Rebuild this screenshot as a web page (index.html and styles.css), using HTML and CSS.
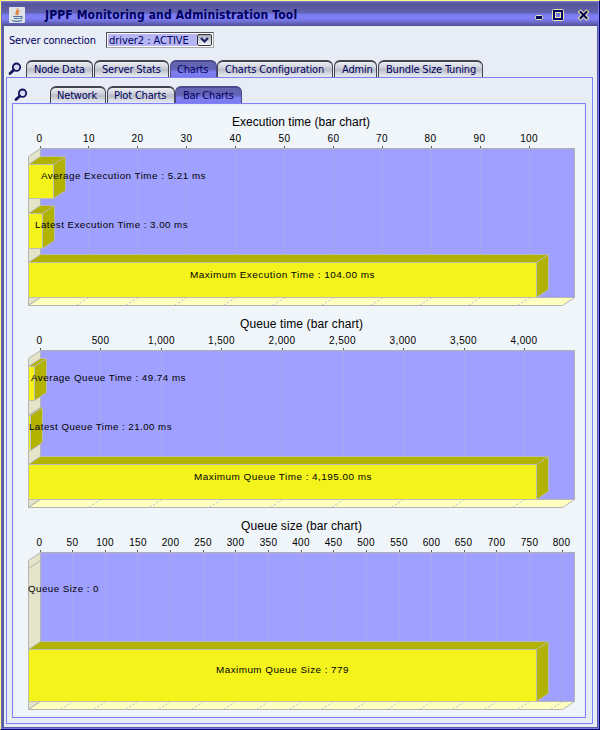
FILE: index.html
```html
<!DOCTYPE html>
<html lang="en">
<head>
<meta charset="utf-8">
<title>JPPF Monitoring and Administration Tool</title>
<link rel="stylesheet" href="styles.css">
</head>
<body>
<div class="window">
  <header class="titlebar">
    <svg class="java" width="16" height="16" viewBox="0 0 16 16">
      <rect width="16" height="16" rx="1" fill="#dfe3e8"/>
      <path d="M8.500 1.500C9.500 3.500 5.500 4.500 7.500 8M10.500 3.500C8 5 8.500 6 9 8" fill="none" stroke="#e8742a" stroke-width="1.300"/>
      <path d="M4 9.500h7.500M5 11.500h5.500M3 13.500c3 1 7 1 10 0M11.500 9.500c2.500-.5 2 2-.5 2" fill="none" stroke="#47759f" stroke-width="1.100"/>
    </svg>
    <h1 class="title"><span>JPPF Monitoring and Administration Tool</span></h1>
    <svg class="controls" width="56" height="14" viewBox="534 8 56 14">
      <rect x="535.500" y="15.500" width="7" height="4" rx="1" fill="#000060" stroke="#e8e8b0"/>
      <rect x="552.500" y="9.500" width="11" height="11" rx="1" fill="none" stroke="#e8e8a8"/>
      <path d="M553 10h10v10h-10zM555 12v6h6v-6z" fill="#000060" fill-rule="evenodd"/>
      <rect x="555.500" y="12.500" width="5" height="5" fill="none" stroke="#e8e8a8"/>
      <path d="M580.500 12l6 6M586.500 12l-6 6" stroke="#e8e8a8" stroke-width="4" stroke-linecap="square"/>
      <path d="M580.500 12l6 6M586.500 12l-6 6" stroke="#000050" stroke-width="2" stroke-linecap="square"/>
    </svg>
  </header>
  <main class="content">
    <div class="connection">
      <label class="conn-label">Server connection</label>
      <div class="combo"><span class="value">driver2 : ACTIVE</span>
        <span class="arrow"><svg width="9" height="6" viewBox="0 0 9 6"><path d="M1 1l3.500 3.500L8 1" fill="none" stroke="#202068" stroke-width="2.200"/></svg></span>
      </div>
    </div>
    <nav class="tabs outer-tabs">
      <svg class="lens" width="14" height="14" viewBox="0 0 14 14"><circle cx="8.500" cy="5.200" r="3.700" fill="#d4daf0" stroke="#151560" stroke-width="1.800"/><path d="M5.800 8L2 11.500" stroke="#151560" stroke-width="2.800" stroke-linecap="round"/></svg>
      <span class="tab t1">Node Data</span><span class="tab t2">Server Stats</span><span class="tab t3 active">Charts</span><span class="tab t4">Charts Configuration</span><span class="tab t5">Admin</span><span class="tab t6">Bundle Size Tuning</span>
    </nav>
    <section class="panel outer">
      <nav class="tabs inner-tabs">
        <svg class="lens" width="14" height="14" viewBox="0 0 14 14"><circle cx="8.500" cy="5.200" r="3.700" fill="#d4daf0" stroke="#151560" stroke-width="1.800"/><path d="M5.800 8L2 11.500" stroke="#151560" stroke-width="2.800" stroke-linecap="round"/></svg>
        <span class="tab n1">Network</span><span class="tab n2">Plot Charts</span><span class="tab n3 active">Bar Charts</span>
      </nav>
      <section class="panel inner">
        <svg class="chart" width="572" height="202" viewBox="13 0 572 202">
          <defs>
            <g id="walls">
              <rect class="back" x="40.500" y="38.500" width="534" height="149"/>
              <path class="side" d="M40.500 38.500L28.500 46.500V195.500L40.500 187.500z"/>
              <path class="floor" d="M28.500 195.500L40.500 187.500H574.500L562.500 195.500z"/>
            </g>
            <g id="maxbar">
              <path class="shade" d="M28.500 152.500L40.500 144.500H548.500V179.500L536.500 187.500V152.500zM536.500 152.500L548.500 144.500"/>
              <rect class="front" x="28.500" y="152.500" width="508" height="35"/>
            </g>
          </defs>
          <text class="heading" x="232" y="16" textLength="138">Execution time (bar chart)</text>
          <use href="#walls"/>
          <path class="grid" d="M88.500 39V187M137.500 39V187M186.500 39V187M235.500 39V187M284.500 39V187M333.500 39V187M382.500 39V187M431.500 39V187M480.500 39V187M529.500 39V187"/>
          <path class="grid" d="M88.500 187.500l-12 8M137.500 187.500l-12 8M186.500 187.500l-12 8M235.500 187.500l-12 8M284.500 187.500l-12 8M333.500 187.500l-12 8M382.500 187.500l-12 8M431.500 187.500l-12 8M480.500 187.500l-12 8M529.500 187.500l-12 8"/>
          <path class="tick" d="M40.500 36v2M88.500 36v2M137.500 36v2M186.500 36v2M235.500 36v2M284.500 36v2M333.500 36v2M382.500 36v2M431.500 36v2M480.500 36v2M529.500 36v2"/>
          <g class="axis"><text x="39.500" y="32">0</text><text x="89" y="32">10</text><text x="137.500" y="32">20</text><text x="186.500" y="32">30</text><text x="235.500" y="32">40</text><text x="284.500" y="32">50</text><text x="333.500" y="32">60</text><text x="382" y="32">70</text><text x="430.500" y="32">80</text><text x="479.500" y="32">90</text><text x="529" y="32">100</text></g>
          <path class="shade" d="M28.500 54.500L40.500 46.500H65.500V80.500L53.500 88.500V54.500zM53.500 54.500L65.500 46.500"/>
          <rect class="front" x="28.500" y="54.500" width="25" height="34"/>
          <path class="shade" d="M28.500 103.500L40.500 95.500H54.500V130.500L42.500 138.500V103.500zM42.500 103.500L54.500 95.500"/>
          <rect class="front" x="28.500" y="103.500" width="14" height="35"/>
          <use href="#maxbar"/>
          <g class="label"><text x="41" y="69" textLength="165" lengthAdjust="spacingAndGlyphs">Average Execution Time : 5.21 ms</text><text x="35" y="118" textLength="153" lengthAdjust="spacingAndGlyphs">Latest Execution Time : 3.00 ms</text><text x="190" y="168" textLength="185" lengthAdjust="spacingAndGlyphs">Maximum Execution Time : 104.00 ms</text></g>
        </svg>
        <svg class="chart" width="572" height="202" viewBox="13 0 572 202">
          <text class="heading" x="240" y="16" textLength="123">Queue time (bar chart)</text>
          <use href="#walls"/>
          <path class="grid" d="M100.500 39V187M161.500 39V187M221.500 39V187M282.500 39V187M343.500 39V187M403.500 39V187M464.500 39V187M524.500 39V187"/>
          <path class="grid" d="M100.500 187.500l-12 8M161.500 187.500l-12 8M221.500 187.500l-12 8M282.500 187.500l-12 8M343.500 187.500l-12 8M403.500 187.500l-12 8M464.500 187.500l-12 8M524.500 187.500l-12 8"/>
          <path class="tick" d="M40.500 36v2M100.500 36v2M161.500 36v2M221.500 36v2M282.500 36v2M343.500 36v2M403.500 36v2M464.500 36v2M524.500 36v2"/>
          <g class="axis"><text x="39.500" y="32">0</text><text x="100.500" y="32">500</text><text x="161.500" y="32">1,000</text><text x="221.500" y="32">1,500</text><text x="282" y="32">2,000</text><text x="342.500" y="32">2,500</text><text x="403" y="32">3,000</text><text x="463.500" y="32">3,500</text><text x="524" y="32">4,000</text></g>
          <path class="shade" d="M28.500 54.500L40.500 46.500H46.500V80.500L34.500 88.500V54.500zM34.500 54.500L46.500 46.500"/>
          <rect class="front" x="28.500" y="54.500" width="6" height="34"/>
          <path class="shade" d="M28.500 103.500L40.500 95.500H42.500V130.500L30.500 138.500V103.500zM30.500 103.500L42.500 95.500"/>
          <rect class="front" x="28.500" y="103.500" width="2" height="35"/>
          <use href="#maxbar"/>
          <g class="label"><text x="31" y="69" textLength="155" lengthAdjust="spacingAndGlyphs">Average Queue Time : 49.74 ms</text><text x="29" y="118" textLength="143" lengthAdjust="spacingAndGlyphs">Latest Queue Time : 21.00 ms</text><text x="194" y="168" textLength="178" lengthAdjust="spacingAndGlyphs">Maximum Queue Time : 4,195.00 ms</text></g>
        </svg>
        <svg class="chart" width="572" height="202" viewBox="13 0 572 202">
          <text class="heading" x="241" y="16" textLength="121">Queue size (bar chart)</text>
          <use href="#walls"/>
          <path class="grid" d="M72.500 39V187M105.500 39V187M137.500 39V187M170.500 39V187M203.500 39V187M235.500 39V187M268.500 39V187M301.500 39V187M333.500 39V187M366.500 39V187M399.500 39V187M431.500 39V187M464.500 39V187M496.500 39V187M529.500 39V187M562.500 39V187"/>
          <path class="grid" d="M72.500 187.500l-12 8M105.500 187.500l-12 8M137.500 187.500l-12 8M170.500 187.500l-12 8M203.500 187.500l-12 8M235.500 187.500l-12 8M268.500 187.500l-12 8M301.500 187.500l-12 8M333.500 187.500l-12 8M366.500 187.500l-12 8M399.500 187.500l-12 8M431.500 187.500l-12 8M464.500 187.500l-12 8M496.500 187.500l-12 8M529.500 187.500l-12 8M562.500 187.500l-12 8"/>
          <path class="tick" d="M40.500 36v2M72.500 36v2M105.500 36v2M137.500 36v2M170.500 36v2M203.500 36v2M235.500 36v2M268.500 36v2M301.500 36v2M333.500 36v2M366.500 36v2M399.500 36v2M431.500 36v2M464.500 36v2M496.500 36v2M529.500 36v2M562.500 36v2"/>
          <g class="axis"><text x="39.500" y="32">0</text><text x="72.500" y="32">50</text><text x="105" y="32">100</text><text x="138" y="32">150</text><text x="170.500" y="32">200</text><text x="203" y="32">250</text><text x="235.500" y="32">300</text><text x="268.500" y="32">350</text><text x="301" y="32">400</text><text x="333.500" y="32">450</text><text x="366" y="32">500</text><text x="399" y="32">550</text><text x="431.500" y="32">600</text><text x="463.500" y="32">650</text><text x="496.500" y="32">700</text><text x="529.500" y="32">750</text><text x="561.500" y="32">800</text></g>
          <path class="side" d="M28.500 54.500L40.500 46.500"/>
          <path class="shade" d="M28.500 135.500L40.500 127.500H548.500V179.500L536.500 187.500V135.500zM536.500 135.500L548.500 127.500"/>
          <rect class="front" x="28.500" y="135.500" width="508" height="52"/>
          <g class="label"><text x="28" y="78" textLength="71" lengthAdjust="spacingAndGlyphs">Queue Size : 0</text><text x="216" y="159" textLength="133" lengthAdjust="spacingAndGlyphs">Maximum Queue Size : 779</text></g>
        </svg>
      </section>
    </section>
  </main>
</div>
</body>
</html>
```
FILE: styles.css
```css
* { box-sizing: border-box; }
body { margin: 0; font: 11px/14px "DejaVu Sans Condensed", "DejaVu Sans", sans-serif; color: #000060; }
.window {
  width: 600px; height: 730px; display: flex; flex-direction: column;
  border: 1px solid #ffff80; border-right-color: #000060; border-bottom-color: #000060;
  background: #5c5ca4; padding: 0 2px 2px 3px;
  box-shadow: inset 1px 0 #6868c0, inset -1px -1px #7c7cec;
}
.titlebar {
  height: 25px; margin: 0 -1px 0 -2px; display: flex; align-items: center;
  padding: 2px 8px 0 7px;
  background: linear-gradient(#7474d0 0, #7474d0 1px, #54549a 2px, #5a5aa0 6px, #6262b0 12px, #7878ee 13px, #8080fa 17px, #7272dc 20px, #56569c 24px, #4c4c90 25px);
}
.java { flex: none; }
.title { flex: 1; margin: 0 0 0 20px; font: bold 12px/16px "DejaVu Sans Condensed", "DejaVu Sans", sans-serif; white-space: nowrap; letter-spacing: 0.15px; }
.controls { flex: none; }
.content { flex: 1; background: #e8edf5; padding: 6px 4px 3px 2px; display: flex; flex-direction: column; min-height: 0; }
.connection { display: flex; align-items: center; height: 16px; padding-left: 4px; }
.conn-label { width: 96px; white-space: nowrap; letter-spacing: -.2px; padding-top: 1px; margin-left: -1px; margin-right: 1px; }
.combo { width: 108px; height: 16px; display: flex; border: 1px solid #50505c; border-right-color: #aaa; border-bottom-color: #aaa; background: #fff; padding: 1px; }
.value { flex: 1; background: #b6b6f4; line-height: 13px; padding-left: 1px; white-space: nowrap; letter-spacing: -.05px; }
.arrow { width: 15px; border: 1px solid #34343c; border-radius: 2px; background: linear-gradient(#a8acb8, #f4f6fa); display: flex; align-items: center; justify-content: center; }
.tabs { display: flex; align-items: flex-end; }
.outer-tabs { height: 17px; margin-top: 12px; padding-left: 2px; }
.inner-tabs { height: 25px; padding-left: 2px; }
.lens { flex: none; align-self: flex-end; margin-bottom: 1px; }
.tab {
  height: 17px; line-height: 16px; padding: 0 0 0 7px; white-space: nowrap; letter-spacing: -.18px;
  border: 1px solid #444450; border-top-width: 2px; border-bottom: 0; border-radius: 6px 6px 0 0; margin-right: 1px;
  background: linear-gradient(#eceef4 0, #d2d5dc 5px, #b9bdc7 8px, #d2d5dc 11px, #eceff5 16px);
}
.tab.active { border-color: #48488c; background: linear-gradient(#6666b4 0, #6262b4 7px, #8080f4 10px, #7878e8 16px); }
.t1 { width: 67px; margin-left: 4px; }
.t2 { width: 75px; }
.t3 { width: 47px; margin-right: 0; padding-left: 6px; }
.t4 { width: 116px; }
.t5 { width: 43px; }
.t6 { width: 105px; }
.n1 { width: 56px; margin-left: 22px; padding-left: 6px; }
.n2 { width: 68px; padding-left: 6px; }
.n3 { width: 67px; margin-left: -1px; }
.panel { border: 1px solid #8080fc; }
.outer { flex: 1; padding: 0 6px 5px 5px; display: flex; flex-direction: column; min-height: 0; }
.inner { flex: 1; background: #eff5f9; padding-top: 6px; display: flex; flex-direction: column; overflow: hidden; min-height: 0; box-shadow: inset 0 0 2px #d8deea; }
.chart { display: block; flex: none; }
.chart text { font-family: "Liberation Sans", Arial, sans-serif; fill: #000; }
.heading { font-size: 12px; }
.axis { font-size: 10px; text-anchor: middle; letter-spacing: .35px; }
.label { font-size: 9.5px; letter-spacing: .45px; }
.back { fill: #a0a0ff; stroke: #b0b0b0; }
.side { fill: #e4e4c8; stroke: #b4b4b4; }
.floor { fill: #ffffc0; stroke: #b4b4b4; }
.grid { fill: none; stroke: #b0b0dc; stroke-dasharray: 2 2; }
.tick { stroke: #606060; }
.shade { fill: #b2b200; stroke: #b8b8b8; stroke-linejoin: round; }
.front { fill: #f4f41c; stroke: #bcbcb8; }
```
